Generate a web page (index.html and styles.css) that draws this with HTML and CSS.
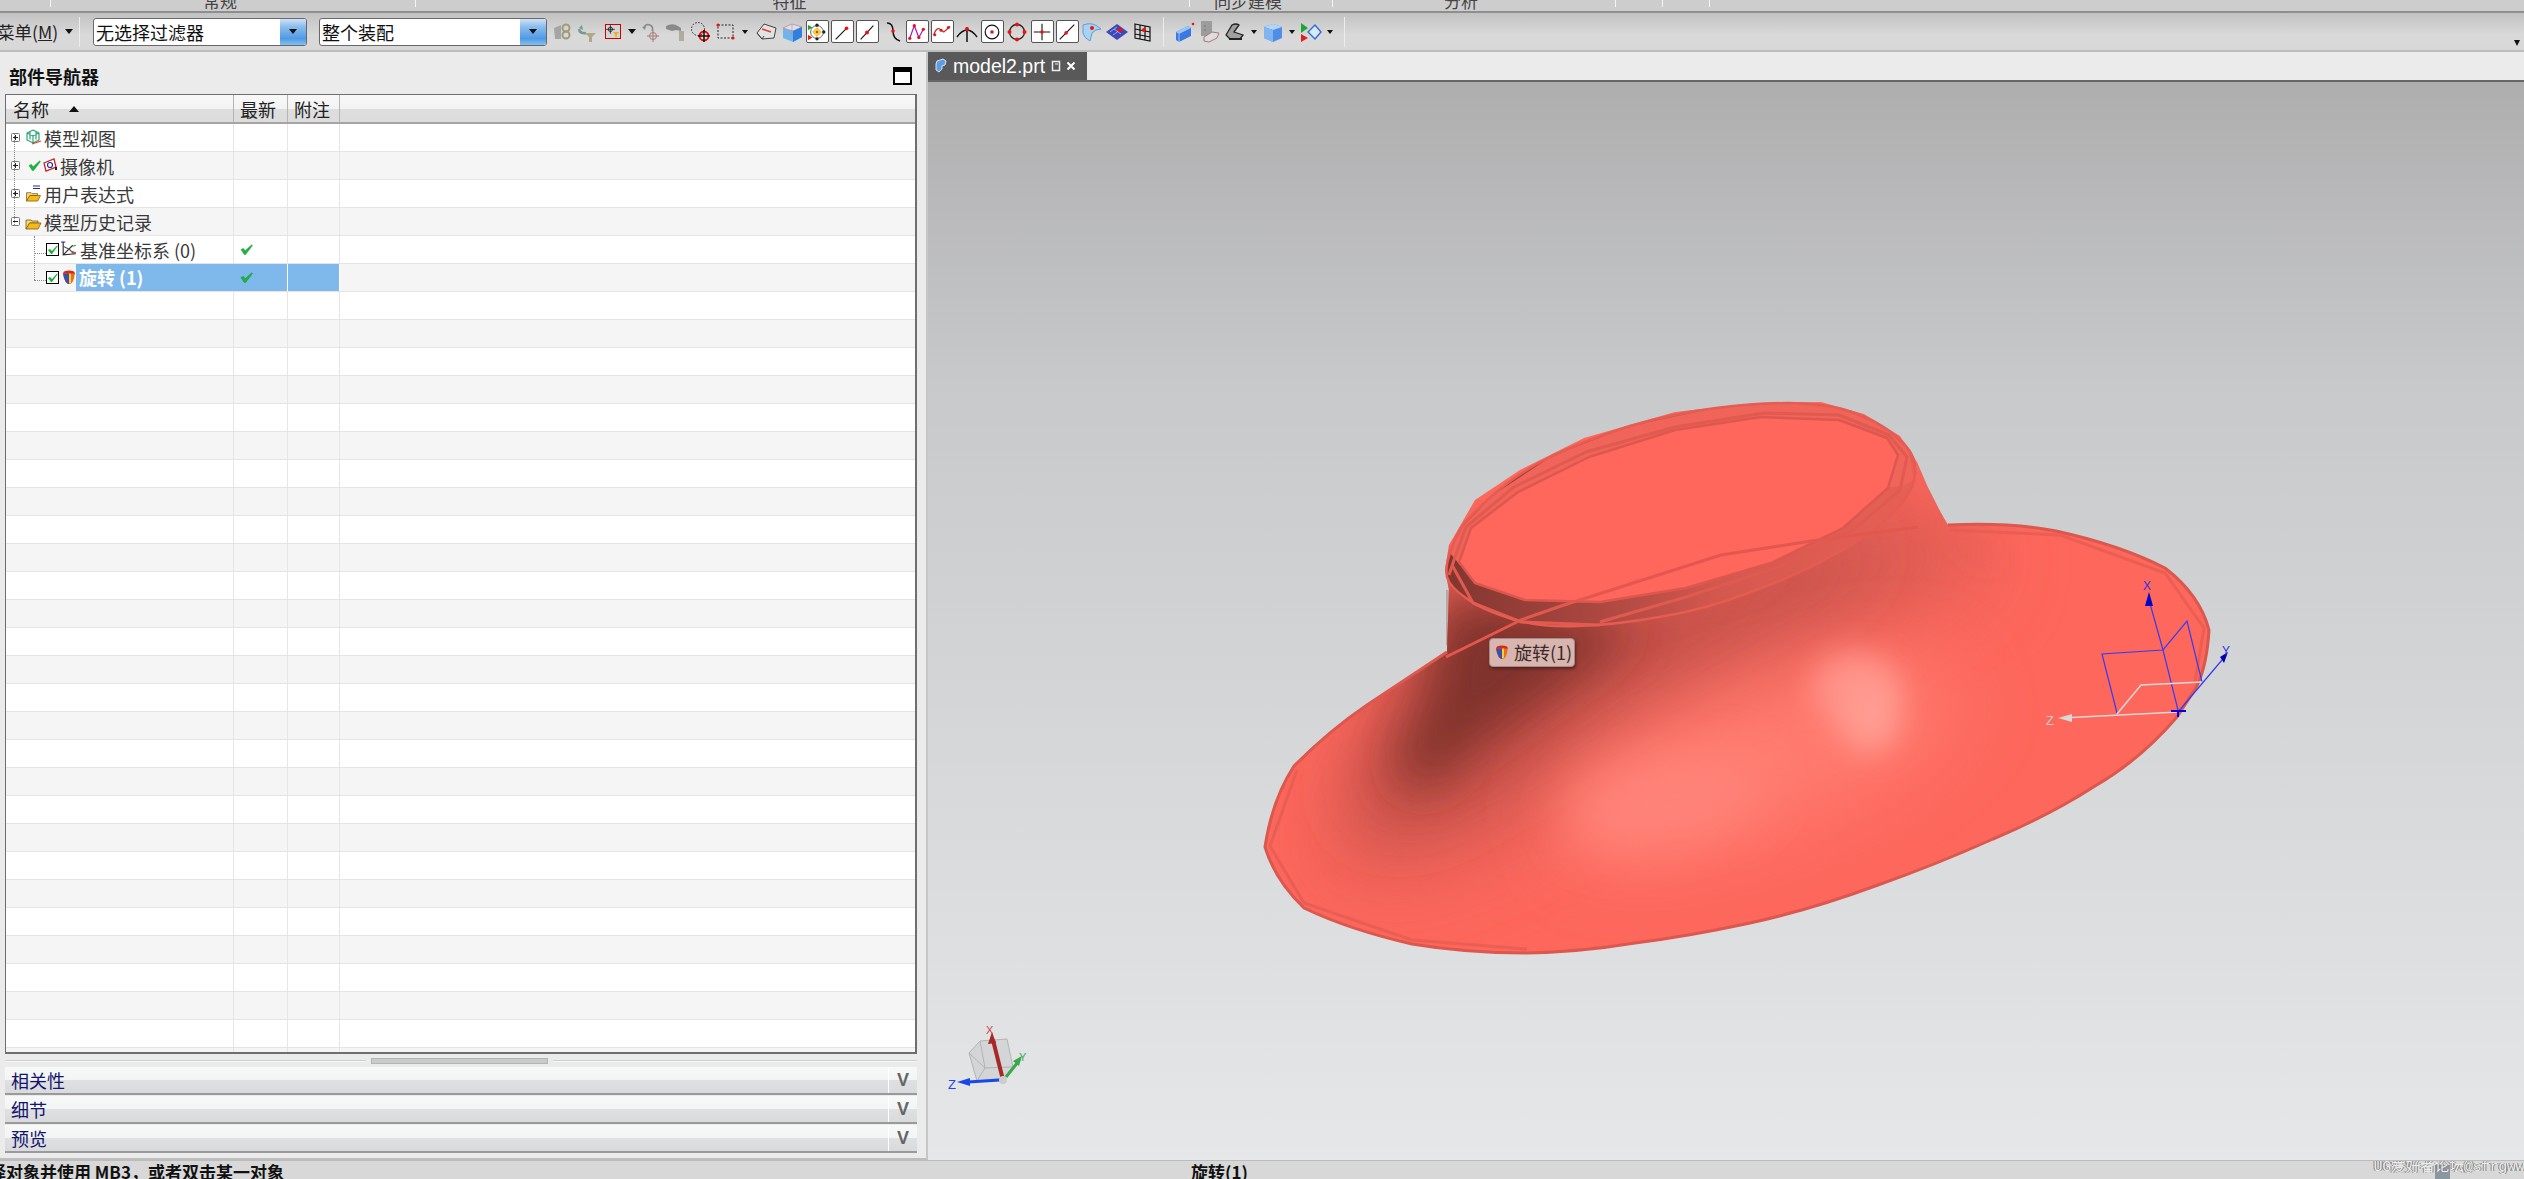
FILE: index.html
```html
<!DOCTYPE html>
<html lang="zh-CN">
<head>
<meta charset="utf-8">
<title>NX model2.prt</title>
<link rel="stylesheet" href="styles.css">
</head>
<body>
<svg class="defs" width="0" height="0" aria-hidden="true">
  <defs>
    <symbol id="chk" viewBox="0 0 14 12"><path d="M1 6l2.600-1.200 2 2.600L12.500 1l1 .6L6 11.500H4.600z" fill="#19b83a" stroke="#0c8a26" stroke-width=".5"/></symbol>
    <symbol id="cbox" viewBox="0 0 13 13"><rect x=".5" y=".5" width="12" height="12" fill="#fff" stroke="#000"/><path d="M2 7l2-1 2 2 5-5.500.8.600L6 11H5z" fill="#16b236"/></symbol>
    <symbol id="plus" viewBox="0 0 9 9"><rect x=".5" y=".5" width="8" height="8" rx="1" fill="#fff" stroke="#777"/><path d="M2 4.500h5M4.500 2v5" stroke="#222"/></symbol>
    <symbol id="minus" viewBox="0 0 9 9"><rect x=".5" y=".5" width="8" height="8" rx="1" fill="#fff" stroke="#777"/><path d="M2 4.500h5" stroke="#222"/></symbol>
    <symbol id="folder" viewBox="0 0 17 14"><path d="M1 13V4h5l1 1h6v2H5z" fill="#f6d77a" stroke="#7a5a10" stroke-width=".8"/><path d="M1 13l3.500-6H16l-3 6z" fill="#f7b916" stroke="#7a5a10" stroke-width=".8"/></symbol>
    <symbol id="revolve" viewBox="0 0 14 15"><path d="M1 3q6-4 12 0l-1 5q-1 5-4 6H6Q3 12 2 8z" fill="#e8701c"/><path d="M1 3.500h6V14H6Q3 12 2 8z" fill="#3b4fa8"/><path d="M7 1h2v12H7z" fill="#f2d23c"/><path d="M2 1.500q5-2 10 0l1 2H1z" fill="#d32a1c"/></symbol>
  </defs>
</svg>

<div class="app">
  <div class="ribbon">
    <div class="rib r1"></div>
    <div class="rib r2"><span>常规</span></div>
    <div class="rib r3"><span>特征</span></div>
    <div class="rib r4"><span>同步建模</span></div>
    <div class="rib r5"><span>分析</span></div>
    <div class="rib r6"></div>
    <div class="rib r6"></div>
  </div>

  <div class="toolbar">
    <div class="menu">菜单(<u>M</u>)</div>
    <i class="tri menu-tri"></i>
    <i class="tsep tsep-a"></i>
    <div class="combo c1"><span>无选择过滤器</span><b><i class="tri"></i></b></div>
    <div class="combo c2"><span>整个装配</span><b><i class="tri"></i></b></div>

    <div class="icons">
      <svg class="ic" viewBox="0 0 24 24"><path d="M3 8l7-3v14H4z" fill="#a5a5a5"/><circle cx="15" cy="8" r="3.500" fill="none" stroke="#a09a78" stroke-width="2"/><circle cx="15" cy="15" r="3.500" fill="none" stroke="#a09a78" stroke-width="2"/></svg>
      <svg class="ic" viewBox="0 0 24 24"><path d="M3 9q1 5 7 4" fill="none" stroke="#6f9a96" stroke-width="2.500"/><path d="M6 5l-3 3 4 2z" fill="#6f9a96"/><path d="M9 13h11l-4 4v5h-3v-5z" fill="#b0a888"/></svg>
      <span class="redbox"><svg viewBox="0 0 16 15"><circle cx="5" cy="5" r="2.500" fill="none" stroke="#222"/><path d="M5 0v10M0 5h10" stroke="#222"/><path d="M8 8h7l-2.500 3v3h-2v-3z" fill="#f2ac1c"/></svg></span>
      <i class="drop"><i class="tri"></i></i>
      <svg class="ic" viewBox="0 0 24 24"><path d="M5 8q2-5 6-3t2 6" fill="none" stroke="#888" stroke-width="1.500"/><path d="M3 7l4-1-1 4z" fill="#888"/><circle cx="14" cy="16" r="3.500" fill="none" stroke="#a47878"/><path d="M14 10v12M8 16h12" stroke="#a47878"/></svg>
      <svg class="ic" viewBox="0 0 24 24"><path d="M2 6q5-3 10-1l5 3v3l-5-1-4 1-6-2z" fill="#8a8a8a"/><rect x="15" y="11" width="5" height="10" fill="#b0ab9c"/></svg>
      <svg class="ic" viewBox="0 0 24 24"><circle cx="9" cy="9" r="6.500" fill="none" stroke="#222" stroke-dasharray="1.500 1.500"/><circle cx="15" cy="16" r="4.500" fill="none" stroke="#e00" stroke-width="1.800"/><path d="M15 10v12M9 16h12" stroke="#111" stroke-width="1.500"/></svg>
      <svg class="ic" viewBox="0 0 24 24"><rect x="4" y="5" width="15" height="13" fill="none" stroke="#222" stroke-dasharray="2 1.500"/><circle cx="4" cy="5" r="1.600" fill="#e11"/><circle cx="19" cy="18" r="1.600" fill="#e11"/></svg>
      <i class="drop small extra"><i class="tri"></i></i>
      <svg class="ic" viewBox="0 0 24 24"><path d="M2 13L9 4l12 4-2 10-12 1z" fill="#e2e2e2" stroke="#444"/><path d="M7 9l9 3" stroke="#e33" stroke-width="1.500"/><path d="M2 13l5 6 2-3" fill="none" stroke="#444"/></svg>
      <svg class="ic" viewBox="0 0 24 24"><path d="M3 8l9-4 10 3v10l-9 5-10-4z" fill="#6fb4ee"/><path d="M3 8l10 3 9-4-10-3z" fill="#cfe6fa" stroke="#e87878" stroke-width=".7"/><path d="M13 11v11l9-5V7z" fill="#2e7fe0"/><path d="M12 4v12" stroke="#e87878" stroke-width=".6"/></svg>
      <span class="bx"><svg viewBox="0 0 22 22"><circle cx="11" cy="11" r="7" fill="none" stroke="#555"/><path d="M11 6l5 5-5 5-5-5z" fill="#f4d820" stroke="#a88" stroke-width=".5"/><circle cx="11" cy="3.500" r="1.800" fill="#222"/><circle cx="11" cy="18.500" r="1.800" fill="#222"/><circle cx="18.500" cy="11" r="1.800" fill="#222"/><circle cx="11" cy="11" r="1.300" fill="#e33"/><path d="M1 3l5 3-5 3z" fill="#18a838"/><path d="M1 14l5 3-5 3z" fill="#e02020"/></svg></span>
      <span class="bx"><svg viewBox="0 0 22 22"><path d="M4 19L17 6" stroke="#111" stroke-width="1.200"/><circle cx="16" cy="7" r="2" fill="#e11"/></svg></span>
      <span class="bx"><svg viewBox="0 0 22 22"><path d="M4 19L18 4" stroke="#111" stroke-width="1.200"/><circle cx="11" cy="11.500" r="2.200" fill="#e11"/></svg></span>
      <svg class="ic" viewBox="0 0 24 24"><path d="M7 3q6 0 6 8t7 10" fill="none" stroke="#111" stroke-width="1.500"/><circle cx="13" cy="11" r="1.800" fill="#e11"/></svg>
      <span class="bx"><svg viewBox="0 0 22 22"><path d="M3 18L8 4l5 13 5-9" fill="none" stroke="#a020c8" stroke-width="1.400"/><circle cx="8" cy="4" r="1.800" fill="#e11"/><circle cx="13" cy="17" r="1.800" fill="#e11"/><circle cx="3" cy="18" r="1.800" fill="#e11"/><circle cx="18" cy="8" r="1.800" fill="#e11"/></svg></span>
      <span class="bx"><svg viewBox="0 0 22 22"><path d="M2 14q3-9 7-6t4 3 7-6" fill="none" stroke="#c03030" stroke-width="1.400"/><circle cx="3" cy="14" r="1.700" fill="#e11"/><circle cx="10" cy="9" r="1.700" fill="#e11"/><circle cx="18" cy="6" r="1.700" fill="#e11"/></svg></span>
      <svg class="ic" viewBox="0 0 24 24"><path d="M2 17q10-14 20 0M12 7v15" fill="none" stroke="#111" stroke-width="1.500"/><circle cx="12" cy="9" r="2" fill="#e11"/></svg>
      <span class="bx"><svg viewBox="0 0 22 22"><circle cx="11" cy="11" r="7.500" fill="none" stroke="#111" stroke-width="1.300"/><circle cx="11" cy="11" r="2" fill="#e11"/></svg></span>
      <svg class="ic" viewBox="0 0 24 24"><circle cx="12" cy="12" r="7.500" fill="none" stroke="#222" stroke-width="1.300"/><circle cx="12" cy="4.500" r="2" fill="#e11"/><circle cx="12" cy="19.500" r="2" fill="#e11"/><circle cx="4.500" cy="12" r="2" fill="#e11"/><circle cx="19.500" cy="12" r="2" fill="#e11"/></svg>
      <span class="bx"><svg viewBox="0 0 22 22"><path d="M11 2v18M2 11h18" stroke="#111" stroke-width="1.200"/><circle cx="11" cy="11" r="2" fill="#e11"/></svg></span>
      <span class="bx"><svg viewBox="0 0 22 22"><path d="M3 19L19 3" stroke="#111" stroke-width="1.200"/><circle cx="10" cy="12" r="2" fill="#e11"/></svg></span>
      <svg class="ic" viewBox="0 0 24 24"><path d="M3 5q8-3 14 1l4 3q-6 0-9 4l-2 8q-6-3-7-8z" fill="#a8d4f4" stroke="#5c9cd4"/><circle cx="12" cy="8" r="2" fill="#e11"/></svg>
      <svg class="ic" viewBox="0 0 24 24"><path d="M1 12L12 4l11 8-11 8z" fill="#3c48b8"/><path d="M5 12l7-5M8 15l7-5M9 9l7 5" stroke="#c8ccf0" stroke-width=".7"/><circle cx="15" cy="10" r="2.300" fill="#e11"/></svg>
      <svg class="ic" viewBox="0 0 24 24"><path d="M5 4l15 3v14L5 18zM10 5v14M15 6v14M5 9l15 3M5 14l15 3" fill="none" stroke="#111" stroke-width="1.200"/><circle cx="14" cy="10" r="2" fill="#e11"/></svg>
      <i class="tsep tsep-b"></i>
      <svg class="ic" viewBox="0 0 24 24"><path d="M3 12l12-6 3 2v8l-12 6-3-2z" fill="#3c78e0"/><path d="M3 12l3 2 12-6-3-2z" fill="#9cc4f4"/><path d="M6 14v8" stroke="#cfe" stroke-width=".6"/><circle cx="20" cy="4" r="1.300" fill="#e11"/></svg>
      <svg class="ic" viewBox="0 0 24 24"><rect x="3" y="1" width="11" height="15" fill="#9c9c9c"/><path d="M6 6h2M6 10h2" stroke="#777"/><path d="M6 17l8-5 7 1-2 5-8 4-5-1z" fill="#ddd" stroke="#a87878"/></svg>
      <svg class="ic" viewBox="0 0 24 24"><path d="M3 15L9 5q4-2 7 0l-5 7 9 3-3 4H7z" fill="#a0a0a0" stroke="#222" stroke-width="1.300"/><path d="M6 19h13" stroke="#222" stroke-width="2"/></svg>
      <i class="drop small"><i class="tri"></i></i>
      <svg class="ic" viewBox="0 0 24 24"><path d="M3 7l9-3 9 3v11l-9 4-9-4z" fill="#4e8ee8"/><path d="M3 7l9 3 9-3-9-3z" fill="#b4d4f8"/><path d="M12 10v12l-9-4V7z" fill="#82b4f0"/></svg>
      <i class="drop small"><i class="tri"></i></i>
      <svg class="ic" viewBox="0 0 24 24"><path d="M2 3l7 5-7 5z" fill="#18a838"/><path d="M2 14l7 4-7 4z" fill="#e02020"/><path d="M9 12l7-7 6 7-6 7z" fill="#d8e8f8" stroke="#2e6ed0" stroke-width="1.400"/></svg>
      <i class="drop small"><i class="tri"></i></i>
      <i class="tsep tsep-c"></i>
    </div>
    <i class="tri end-tri"></i>
  </div>

  <div class="main">
    <section class="nav">
      <header class="nav-title"><h2>部件导航器</h2><i class="maxi"></i></header>
      <div class="table">
        <div class="thead">
          <div class="c-name"><span>名称</span><i class="tri up"></i></div>
          <div class="c-new">最新</div>
          <div class="c-note">附注</div>
          <div class="c-rest"></div>
        </div>
        <div class="rows">
        <div class="tree-dot v1"></div>
        <div class="tree-dot v2"></div>
        <div class="tree-dot h1"></div>
        <div class="tree-dot h2"></div>

        <div class="row">
          <div class="c-name"><svg class="exp"><use href="#plus"/></svg>
            <svg class="ti" viewBox="0 0 17 17"><path d="M8 1l6 3v7l-6 3-6-3V4zM2 4l6 3 6-3M8 7v7M5 2.500v8M11 2.500v8" fill="none" stroke="#1aa06a" stroke-width="1.100"/><path d="M7 15l9-3" stroke="#e33" stroke-width="1.300"/></svg>
            <span class="lbl">模型视图</span></div>
          <div class="c-new"></div><div class="c-note"></div><div class="c-rest"></div>
        </div>
        <div class="row">
          <div class="c-name"><svg class="exp"><use href="#plus"/></svg>
            <svg class="st"><use href="#chk"/></svg>
            <svg class="ti cam" viewBox="0 0 15 15"><path d="M1 5l10-4 2 8-10 4z" fill="#fff" stroke="#d02020" stroke-width="1.300"/><circle cx="7" cy="7" r="2.500" fill="none" stroke="#2030a0" stroke-width="1.200"/><path d="M12 9h2v3h-2" fill="#222"/></svg>
            <span class="lbl">摄像机</span></div>
          <div class="c-new"></div><div class="c-note"></div><div class="c-rest"></div>
        </div>
        <div class="row">
          <div class="c-name"><svg class="exp"><use href="#plus"/></svg>
            <svg class="ti" viewBox="0 0 17 17"><path d="M8 1h7M8 3.500h7" stroke="#2a2a90"/><use href="#folder" y="4" width="17" height="13"/></svg>
            <span class="lbl">用户表达式</span></div>
          <div class="c-new"></div><div class="c-note"></div><div class="c-rest"></div>
        </div>
        <div class="row">
          <div class="c-name"><svg class="exp"><use href="#minus"/></svg>
            <svg class="ti" viewBox="0 0 17 17"><use href="#folder" y="3" width="17" height="14"/></svg>
            <span class="lbl">模型历史记录</span></div>
          <div class="c-new"></div><div class="c-note"></div><div class="c-rest"></div>
        </div>
        <div class="row">
          <div class="c-name child"><svg class="cb"><use href="#cbox"/></svg>
            <svg class="ti csys" viewBox="0 0 16 16"><path d="M3 1v12l12-1M3 13l9-9" fill="none" stroke="#333" stroke-width="1.100"/><path d="M3 5l6 3 4 4" fill="none" stroke="#555"/><path d="M1 1h4" stroke="#22a"/><path d="M12 5l3-1" stroke="#2a2"/><path d="M11 10l4 1" stroke="#c33"/></svg>
            <span class="lbl">基准坐标系 (0)</span></div>
          <div class="c-new"><svg class="st"><use href="#chk"/></svg></div><div class="c-note"></div><div class="c-rest"></div>
        </div>
        <div class="row">
          <div class="c-name child"><svg class="cb"><use href="#cbox"/></svg>
            <svg class="ti rev"><use href="#revolve"/></svg>
            <span class="lbl sel">旋转 (1)</span></div>
          <div class="c-new sel"><svg class="st"><use href="#chk"/></svg></div><div class="c-note sel"></div><div class="c-rest"></div>
        </div>

        <div class="row e"><i></i><i></i><i></i></div><div class="row e"><i></i><i></i><i></i></div>
        <div class="row e"><i></i><i></i><i></i></div><div class="row e"><i></i><i></i><i></i></div>
        <div class="row e"><i></i><i></i><i></i></div><div class="row e"><i></i><i></i><i></i></div>
        <div class="row e"><i></i><i></i><i></i></div><div class="row e"><i></i><i></i><i></i></div>
        <div class="row e"><i></i><i></i><i></i></div><div class="row e"><i></i><i></i><i></i></div>
        <div class="row e"><i></i><i></i><i></i></div><div class="row e"><i></i><i></i><i></i></div>
        <div class="row e"><i></i><i></i><i></i></div><div class="row e"><i></i><i></i><i></i></div>
        <div class="row e"><i></i><i></i><i></i></div><div class="row e"><i></i><i></i><i></i></div>
        <div class="row e"><i></i><i></i><i></i></div><div class="row e"><i></i><i></i><i></i></div>
        <div class="row e"><i></i><i></i><i></i></div><div class="row e"><i></i><i></i><i></i></div>
        <div class="row e"><i></i><i></i><i></i></div><div class="row e"><i></i><i></i><i></i></div>
        <div class="row e"><i></i><i></i><i></i></div><div class="row e"><i></i><i></i><i></i></div>
        <div class="row e"><i></i><i></i><i></i></div><div class="row e"><i></i><i></i><i></i></div>
        <div class="row e"><i></i><i></i><i></i></div><div class="row e"><i></i><i></i><i></i></div>
        </div>
      </div>
      <div class="splitter"><i></i><b></b><i></i></div>
      <div class="sect"><span>相关性</span><em>V</em></div>
      <div class="sect"><span>细节</span><em>V</em></div>
      <div class="sect"><span>预览</span><em>V</em></div>
    </section>

    <section class="view">
      <div class="tabs">
        <div class="tab">
          <svg class="tab-ic" viewBox="0 0 13 16"><path d="M3 3l6-2 3 2-1 4-3 1v3l-3 3-3-2V6z" fill="#5c9ce8" stroke="#fff" stroke-width=".8"/></svg>
          <span>model2.prt</span>
          <svg class="tab-pin" viewBox="0 0 10 12"><path d="M1.500 1.500h7v9h-7z" fill="none" stroke="#eee" stroke-width="1.500"/><path d="M4 4h3" stroke="#eee"/></svg>
          <svg class="tab-x" viewBox="0 0 10 10"><path d="M1.500 1.500l7 7M8.500 1.500l-7 7" stroke="#fff" stroke-width="2"/></svg>
        </div>
      </div>
      <div class="canvas">
        <svg class="scene" viewBox="928 82 1596 1078" preserveAspectRatio="none">
          <defs>
            <clipPath id="bodyClip"><path d="M1948 525 Q2010 522 2056 531 Q2120 545 2165 568 Q2200 595 2209 630 Q2207 665 2197 686 L2177 717 Q2140 760 2095 786 Q2050 815 1993 839 Q1935 865 1878 885 Q1810 910 1750 923 Q1690 936 1635 943 Q1580 952 1527 953 Q1465 953 1412 944 Q1350 930 1304 908 Q1275 880 1265 847 Q1272 800 1294 766 Q1330 730 1367 705 L1447 652 L1449 590 L1445 570 L1449 545 L1475 500 L1520 470 L1584 438 L1675 412 L1757 403 L1821 402 L1864 414 L1900 436 L1917 462 Q1930 495 1948 525 Z"/></clipPath>
            <filter id="b15" x="-50%" y="-50%" width="200%" height="200%"><feGaussianBlur stdDeviation="15"/></filter>
            <filter id="b25" x="-50%" y="-50%" width="200%" height="200%"><feGaussianBlur stdDeviation="25"/></filter>
            <filter id="b40" x="-50%" y="-50%" width="200%" height="200%"><feGaussianBlur stdDeviation="40"/></filter>
            <linearGradient id="band" x1="1450" y1="0" x2="1900" y2="0" gradientUnits="userSpaceOnUse">
              <stop offset="0" stop-color="#823630"/><stop offset=".3" stop-color="#a8463f"/><stop offset=".6" stop-color="#d4584e"/><stop offset="1" stop-color="#e65f55"/>
            </linearGradient>
          </defs>

          <path d="M1446 590h5l-1 55h-4z" fill="#b8a8a6"/>
          <g clip-path="url(#bodyClip)">
            <rect x="1240" y="390" width="1000" height="580" fill="#fd675c"/>
            <path d="M1440 585 L1700 590 L1880 490 L1960 520 L1990 570 L1860 640 L1700 720 L1530 830 L1400 880 L1320 860 L1380 730 Z" fill="#dc5c52" filter="url(#b40)"/>
            <path d="M1440 590 L1640 610 L1760 570 L1850 530 L1860 560 L1740 620 L1620 680 L1510 760 L1400 820 L1350 800 L1400 720 Z" fill="#b0473f" filter="url(#b40)"/>
            <path d="M1449 600 L1600 625 L1640 625 L1560 680 L1470 745 L1425 790 L1395 770 L1430 700 Z" fill="#7e302a" filter="url(#b25)"/>
            <ellipse cx="1760" cy="760" rx="210" ry="70" fill="#ff7b6f" filter="url(#b40)" transform="rotate(-20 1760 760)"/>
            <ellipse cx="1855" cy="688" rx="44" ry="36" fill="#ff9187" filter="url(#b15)"/>
            <ellipse cx="1870" cy="715" rx="30" ry="38" fill="#ff9c92" filter="url(#b15)"/>
            <ellipse cx="1665" cy="802" rx="100" ry="42" fill="#ff8379" filter="url(#b25)" transform="rotate(-12 1665 802)"/>
            <path d="M1948 525 Q1968 550 2000 565" fill="none" stroke="#cf5248" stroke-width="3" filter="url(#b15)"/>
          </g>

          <path class="edge" d="M1948 525 Q2010 522 2056 531 Q2120 545 2165 568 Q2200 595 2209 630 Q2207 665 2197 686 L2177 717 Q2140 760 2095 786 Q2050 815 1993 839 Q1935 865 1878 885 Q1810 910 1750 923 Q1690 936 1635 943 Q1580 952 1527 953 Q1465 953 1412 944 Q1350 930 1304 908 Q1275 880 1265 847 Q1272 800 1294 766 Q1330 730 1367 705 L1447 652"/>
          <path class="edge2" d="M1950 530 L2060 535 L2165 573 L2204 628 L2195 682 M1412 940 L1304 903 L1270 846 L1297 770 M1412 940 L1527 949"/>

          <path d="M1450 553 Q1454 540 1461 528 Q1468 517 1493 495 Q1518 473 1552 456 Q1586 440 1630 426 Q1675 413 1716 408 Q1757 403 1789 403 Q1821 403 1842 409 Q1864 415 1882 426 Q1900 437 1909 450 Q1918 463 1914 480 Q1911 497 1887 518 Q1864 540 1828 558 Q1793 577 1748 593 Q1704 610 1659 617 Q1614 625 1578 626 Q1543 628 1512 619 Q1482 610 1466 598 Q1450 587 1447 577 Q1445 567 1450 553 Z" fill="url(#band)"/>
          <polygon points="1450,553 1461,528 1493,495 1552,456 1630,426 1716,408 1789,403 1842,409 1882,426 1909,450 1914,480 1905,485 1460,565" fill="#f0645a"/>
          <polygon points="1459,562 1471,528 1518,492 1589,457 1675,430 1761,417 1839,420 1887,438 1898,455 1888,488 1843,528 1771,563 1686,588 1600,602 1525,600 1475,583" fill="#ff665c" stroke="#dc584e" stroke-width="2.500" stroke-linejoin="round"/>
          <polyline class="rim" points="1449,575 1454,560 1466,527 1514,487 1586,452 1675,427 1764,413 1839,415 1889,435 1907,457 1900,490 1853,530 1779,567 1686,597 1600,622"/>
          <polyline class="rim" points="1452,565 1473,603 1521,622 1600,625"/>
          <path class="rim outer" d="M1450 553 Q1454 540 1461 528 Q1468 517 1493 495 Q1518 473 1552 456 Q1586 440 1630 426 Q1675 413 1716 408 Q1757 403 1789 403 Q1821 403 1842 409 Q1864 415 1882 426 Q1900 437 1909 450 Q1918 463 1914 480 Q1911 497 1887 518 Q1864 540 1828 558 Q1793 577 1748 593 Q1704 610 1659 617 Q1614 625 1578 626 Q1543 628 1512 619 Q1482 610 1466 598 Q1450 587 1447 577 Q1445 567 1450 553 Z"/>
          <polyline class="rim thin" points="1446,657 1521,620 1561,606 1721,555 1818,540 1918,527"/>

          <g class="triad">
            <polyline class="bl" points="2117,713 2102,654 2163,650 2187,621 2202,682"/>
            <path class="bl" d="M2163 650L2178 710"/>
            <polyline class="wh" points="2062,718 2178,712"/>
            <polyline class="wh" points="2117,714 2141,685 2202,682"/>
            <path class="bl" d="M2149 600L2163 650M2178 712L2222 660"/>
            <path d="M2149 592l-4 14h8z" fill="#0000c8"/>
            <path d="M2228 652l-8 5 4 6z" fill="#0000b0"/>
            <path d="M2058 718l14-4v8z" fill="#d8d8d8"/>
            <path d="M2171 711h15M2178 710v7" stroke="#0000e0" stroke-width="2"/>
            <text class="tx bt" x="2143" y="590">X</text>
            <text class="tx bt" x="2222" y="655">Y</text>
            <text class="tx gt" x="2046" y="725">Z</text>
          </g>

          <g class="mini">
            <path class="cube" d="M980 1041L1007 1039L1013 1067L1004 1078L977 1081L969 1053Z"/>
            <path class="cube" d="M969 1053L985 1068L1013 1067M985 1068L977 1081M980 1041L985 1068"/>
            <path d="M1003 1080L993 1040" stroke="#a82828" stroke-width="4"/><path d="M992 1032l-4 12 8-1z" fill="#a82828"/>
            <path d="M1006 1077L1018 1062" stroke="#38a848" stroke-width="3"/><path d="M1022 1056l-9 5 6 5z" fill="#38a848"/>
            <path d="M1000 1080L968 1082" stroke="#1848e8" stroke-width="3"/><path d="M957 1082l13-4v8z" fill="#1848e8"/>
            <circle cx="1003" cy="1080" r="4" fill="#ccc"/>
            <text class="tm rd" x="986" y="1034">X</text>
            <text class="tm gr" x="1019" y="1061">Y</text>
            <text class="tm bu" x="948" y="1089">Z</text>
          </g>
        </svg>
        <div class="tip"><svg class="tip-ic"><use href="#revolve"/></svg>旋转(1)</div>
      </div>
    </section>
  </div>

  <footer class="status">
    <span class="st-left">选择对象并使用 MB3，或者双击某一对象</span>
    <span class="st-mid">旋转(1)</span>
    <i class="tray"></i>
    <span class="wm">UG爱好者论坛@sfrgww</span>
  </footer>
</div>
</body>
</html>
```

FILE: styles.css
```css
* { box-sizing: border-box; }
html, body { margin: 0; padding: 0; }
body { width: 2524px; height: 1179px; overflow: hidden; font-family: "Noto Sans CJK SC", "Liberation Sans", sans-serif; background: #ebebeb; }
.defs { position: absolute; }
i, em { font-style: normal; }
.app { display: flex; flex-direction: column; width: 2524px; height: 1179px; overflow: hidden; }

/* ribbon remnant */
.ribbon { display: flex; flex: none; height: 13px; background: #cdcdcd; border-bottom: 2px solid #8e8e8e; overflow: hidden; }
.rib { flex: none; height: 7px; border-right: 1px solid #f4f4f4; padding-right: 26px; text-align: center; font-size: 17px; line-height: 17px; color: #444; }
.rib span { display: block; margin-top: -8px; }
.r1 { width: 51px; padding: 0; }
.r2 { width: 365px; }
.r3 { width: 774px; }
.r4 { width: 143px; }
.r5 { width: 283px; }
.r6 { width: 47px; padding: 0; }

/* toolbar */
.toolbar { position: relative; display: flex; align-items: center; flex: none; height: 39px; background: linear-gradient(#c2c2c2, #d9d9d9 60%, #d8d8d8); border-bottom: 2px solid #bcbcbc; }
.menu { margin-left: -3px; width: 64px; font-size: 17.500px; line-height: 24px; color: #222; white-space: nowrap; }
.tri { display: block; width: 0; height: 0; border-left: 4px solid transparent; border-right: 4px solid transparent; border-top: 5px solid #111; }
.menu-tri { margin-left: 4px; }
.tsep { display: block; flex: none; width: 1px; height: 30px; background: #ececec; }
.tsep-a { margin-left: 6px; }
.combo { display: flex; flex: none; height: 28px; margin-left: 13px; border: 1px solid #686868; border-radius: 3px; background: #fff; overflow: hidden; }
.combo span { flex: 1; padding-left: 2px; font-size: 18px; line-height: 26px; color: #111; white-space: nowrap; }
.combo b { display: flex; align-items: center; justify-content: center; flex: none; width: 26px; background: linear-gradient(#cfe2f6 0, #8bbdec 30%, #4f9ae6 75%, #86c0f2); }
.c1 { width: 214px; }
.c2 { width: 228px; }
.c2.c2 { margin-left: 12px; }
.icons { display: flex; align-items: center; gap: 1px; margin-left: 4px; height: 30px; }
.ic, .bx, .redbox { display: flex; align-items: center; justify-content: center; flex: none; width: 24px; height: 24px; }
.bx svg { display: block; width: 20px; height: 20px; }
.bx { border: 1px solid #555; border-radius: 2px; background: #fff; width: 23px; height: 23px; margin: 0 .5px; }
.redbox { width: 16px; height: 15px; margin: 0 4px; border: 1px solid #c00; background: #d5d5d5; }
.redbox svg { width: 14px; height: 13px; }
.drop { display: flex; justify-content: center; flex: none; width: 12px; }
.drop.small .tri { border-left-width: 3.500px; border-right-width: 3.500px; border-top-width: 4px; }
.drop.extra { margin-right: 3px; }
.tsep-b { margin: 0 8px 0 8px; }
.tsep-c { margin-left: 7px; }
.end-tri { position: absolute; right: 4px; top: 27px; border-left-width: 3.500px; border-right-width: 3.500px; border-top-width: 6px; }

/* main */
.main { display: flex; flex: none; height: 1108px; }
.nav { display: flex; flex-direction: column; flex: none; width: 928px; padding: 0 9px 0 5px; background: #ebebeb; border-right: 2px solid #c6c6c6; border-bottom: 2px solid #bdbdbd; }
.nav-title { display: flex; align-items: center; justify-content: space-between; flex: none; height: 42px; padding: 6px 5px 0 4px; }
.nav-title h2 { margin: 0; font-size: 18px; font-weight: 700; line-height: 26px; color: #111; }
.maxi { display: block; width: 19px; height: 18px; border: 2px solid #000; border-top-width: 5px; background: #fff; }

.table { flex: none; height: 960px; background: #fff; border: 1px solid #6e6e6e; border-width: 1px 2px 2px 1px; overflow: hidden; }
.thead { display: flex; height: 29px; background: linear-gradient(#f8f8f8 0, #f3f3f3 50%, #dedede 51%, #dcdcdc 100%); border-bottom: 2px solid #a5a5a5; font-size: 18px; color: #222; line-height: 28px; }
.thead > div { border-right: 1px solid #b4b4b4; }
.thead .c-name { display: flex; align-items: center; padding-left: 7px; }
.thead .c-rest { border: 0; flex: 1; }
.thead .c-new, .thead .c-note { padding-left: 6px; }
.up { margin-left: 20px; border-top: 0; border-bottom: 6px solid #111; border-left-width: 5px; border-right-width: 5px; }
.c-name { flex: none; width: 228px; }
.c-new { flex: none; width: 54px; }
.c-note { flex: none; width: 52px; }
.rows { position: relative; }
.row { display: flex; height: 28px; border-bottom: 1px solid #e4e4e4; background: #fff; }
.row:nth-of-type(even) { background: #f5f5f5; }
.row > div, .row.e > i { border-right: 1px solid #e6e6e6; }
.row .c-rest { flex: 1; border: 0; }
.row > div { display: flex; align-items: center; }
.row.e > i { display: block; flex: none; }
.row.e > i:nth-child(1) { width: 228px; }
.row.e > i:nth-child(2) { width: 54px; }
.row.e > i:nth-child(3) { width: 52px; }
.row .c-name { padding-left: 5px; }
.row .c-name.child { padding-left: 40px; }
.exp { flex: none; width: 9px; height: 9px; margin-right: 5px; }
.ti { flex: none; width: 17px; height: 17px; margin-left: 0; }
.st { flex: none; width: 13px; height: 11px; }
.c-name .st { margin-left: 3px; }
.c-new .st { margin-left: 6px; }
.cam { width: 15px; height: 15px; margin-left: 2px; }
.cb { flex: none; width: 13px; height: 13px; }
.csys { margin-left: 1px; }
.rev { width: 14px; height: 15px; margin-left: 3px; }
.lbl { margin-left: 2px; font-size: 18px; line-height: 26px; color: #3a3a3a; white-space: nowrap; }
.lbl.sel { flex: 1; align-self: stretch; margin: 0 -1px 0 0; padding-left: 3px; font-weight: 700; color: #fff; line-height: 27px; background: #7fb9ec; }
.row > .sel { background: #7fb9ec; border-right-color: #fff; }
.child .csys + .lbl { margin-left: 3px; }

.tree-dot { position: absolute; z-index: 1; border: 0 dotted #888; }
.v1 { left: 8px; top: 9px; height: 92px; border-left-width: 1px; }
.v2 { left: 28px; top: 112px; height: 44px; border-left-width: 1px; }
.h1 { left: 28px; top: 129px; width: 12px; border-top-width: 1px; }
.h2 { left: 28px; top: 156px; width: 12px; border-top-width: 1px; }

.splitter { display: flex; align-items: center; flex: none; height: 13px; gap: 5px; }
.splitter i { display: block; flex: none; height: 2px; background: #cfcfcf; border-bottom: 1px solid #f6f6f6; }
.splitter i:first-child { width: 361px; }
.splitter i:last-child { width: 364px; }
.splitter b { display: block; flex: none; width: 177px; height: 6px; background: #cacaca; border: 1px solid #b4b4b4; }
.sect { display: flex; justify-content: space-between; flex: none; height: 28px; margin-bottom: 1px; background: linear-gradient(#f7f8f8 0, #f3f4f4 50%, #dfe0e1 51%, #d9dadb 100%); border-bottom: 2px solid #9a9a9a; font-size: 18px; line-height: 26px; color: #14146e; padding-left: 6px; }
.sect em { display: block; width: 29px; border-left: 1px solid #fff; text-align: center; font: 700 18px/26px "Liberation Sans", sans-serif; color: #666; }

/* viewport */
.view { display: flex; flex-direction: column; flex: 1; min-width: 0; }
.tabs { flex: none; height: 30px; background: #ebebeb; border-bottom: 2px solid #666; }
.tab { display: flex; align-items: center; width: 159px; height: 28px; padding-left: 6px; background: #595959; color: #fff; font: 19.500px/28px "Liberation Sans", sans-serif; }
.tab-ic { flex: none; width: 13px; height: 16px; margin-right: 6px; }
.tab-pin { flex: none; width: 10px; height: 12px; margin-left: 6px; }
.tab-x { flex: none; width: 10px; height: 10px; margin-left: 5px; }
.canvas { position: relative; flex: 1; min-height: 0; background: linear-gradient(#aeaeaf 0, #c8c9cb 28%, #e6e7e9 100%); }
.scene { display: block; width: 100%; height: 100%; }
.edge { fill: none; stroke: #dc574d; stroke-width: 3; }
.edge2 { fill: none; stroke: #e55d53; stroke-width: 3; opacity: .8; }
.rim { fill: none; stroke: #e05a50; stroke-width: 3; stroke-linejoin: round; }
.rim.outer { stroke: #e45c52; stroke-width: 2.500; }
.rim.thin { stroke: #e2584e; stroke-width: 3; }
.bl { fill: none; stroke: #3a3af0; stroke-width: 1.200; }
.wh { fill: none; stroke: #d9d9d9; stroke-width: 1.500; }
.tx { font: 12px "Liberation Sans", sans-serif; }
.bt { fill: #3030e0; }
.gt { fill: #cccccc; font-size: 13px; }
.cube { fill: #d4d5d6; stroke: #b4b4b4; stroke-width: 1; }
.mini path.cube + path.cube { fill: none; }
.tm { font: 11px "Liberation Sans", sans-serif; }
.rd { fill: #cc4444; }
.gr { fill: #44aa66; }
.bu { fill: #2244ee; font-size: 13px; }
.tip { position: absolute; left: 561px; top: 556px; display: flex; align-items: center; width: 86px; height: 29px; padding-left: 5px; background: #d8b5af; border: 1px solid #a58b88; border-radius: 4px; box-shadow: 1px 2px 3px rgba(60, 20, 20, .6); font-size: 18px; line-height: 27px; color: #3a2a2a; white-space: nowrap; }
.tip-ic { flex: none; width: 14px; height: 15px; margin-right: 5px; }

/* status */
.status { position: relative; display: flex; flex: none; height: 19px; overflow: hidden; background: #d8d8d8; border-top: 1px solid #bcbcbc; font-size: 17px; font-weight: 700; line-height: 22px; color: #111; }
.st-left { margin-left: -28px; width: 1219px; flex: none; white-space: nowrap; }
.st-mid { flex: none; }
.tray { position: absolute; right: 74px; top: 4px; width: 15px; height: 15px; background: #8a96a0; }
.wm { position: absolute; right: 0; top: -2px; font: 400 15px/18px "Liberation Mono", "Noto Sans CJK SC", monospace; letter-spacing: -.4px; color: #ececec; text-shadow: 1px 0 0 #808080, -1px 0 0 #808080; white-space: nowrap; }
```
